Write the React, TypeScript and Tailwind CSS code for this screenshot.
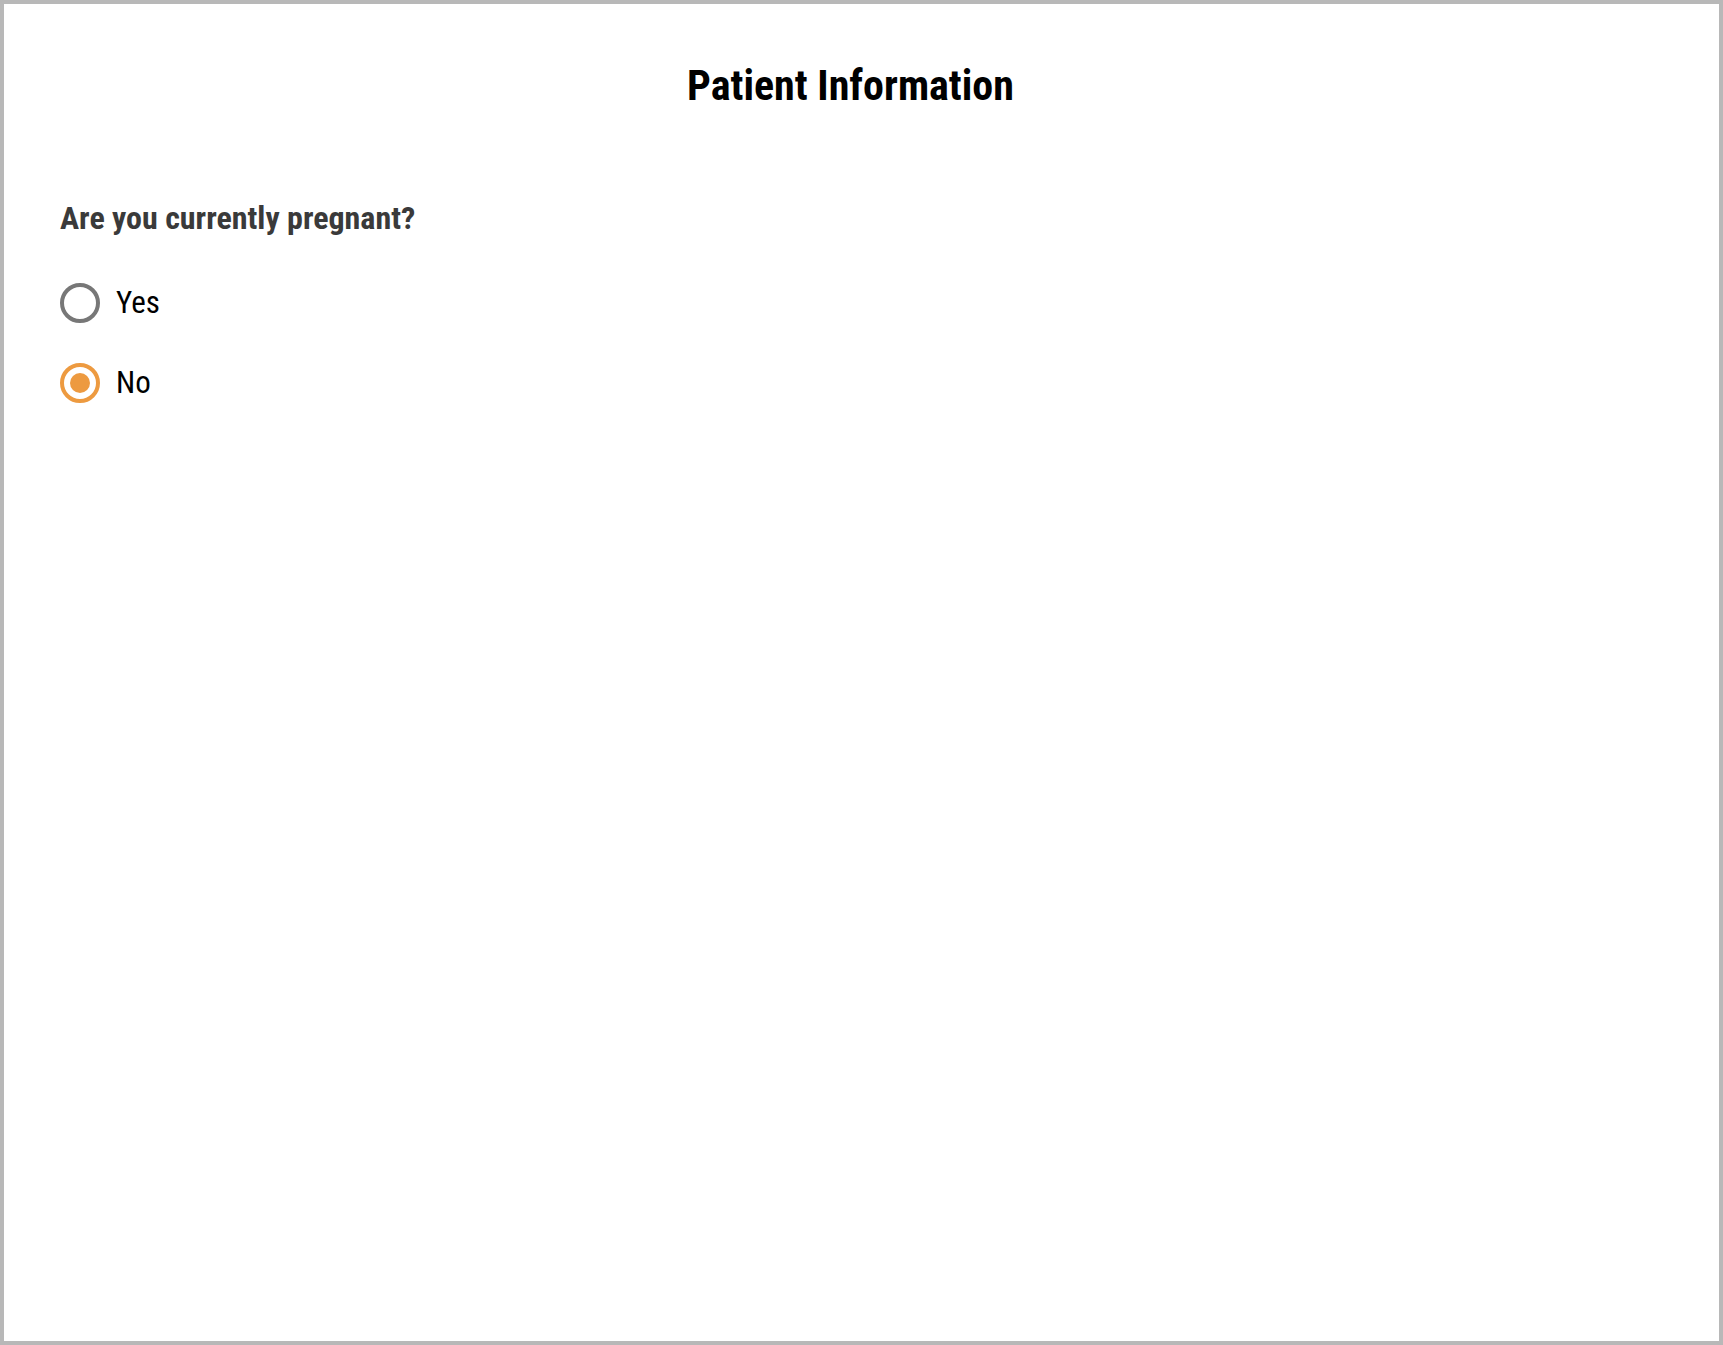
import { useState } from 'react';

const options = ['Yes', 'No'];

const App = () => {
  const [answer, setAnswer] = useState('No');

  return (
    <div className="h-[1345px] w-[1723px] border-4 border-[#b8b8b8] bg-white font-['Roboto',sans-serif] font-stretch-condensed">
      <h1 className="pt-[57px] pr-[22px] text-center text-[42px] leading-[50px] font-bold text-black">Patient Information</h1>

      <div className="px-[56px] pt-[88px]">
        <h2 className="text-[32px] leading-[38px] font-bold text-[#3a3a3a]">Are you currently pregnant?</h2>

        <div className="mt-[46px] flex flex-col gap-[40px]">
          {options.map((opt) => {
            const checked = answer === opt;
            return (
              <label key={opt} className="flex cursor-pointer items-center gap-[16px]" onClick={() => setAnswer(opt)}>
                <span
                  className={
                    checked
                      ? 'flex h-[40px] w-[40px] items-center justify-center rounded-full border-4 border-[#ed9a40]'
                      : 'flex h-[40px] w-[40px] items-center justify-center rounded-full border-4 border-[#777777]'
                  }
                >
                  {checked && <span className="h-[20px] w-[20px] rounded-full bg-[#ed9a40]" />}
                </span>
                <span className="text-[31px] leading-[40px] text-black">{opt}</span>
              </label>
            );
          })}
        </div>
      </div>
    </div>
  );
};

export default App;
